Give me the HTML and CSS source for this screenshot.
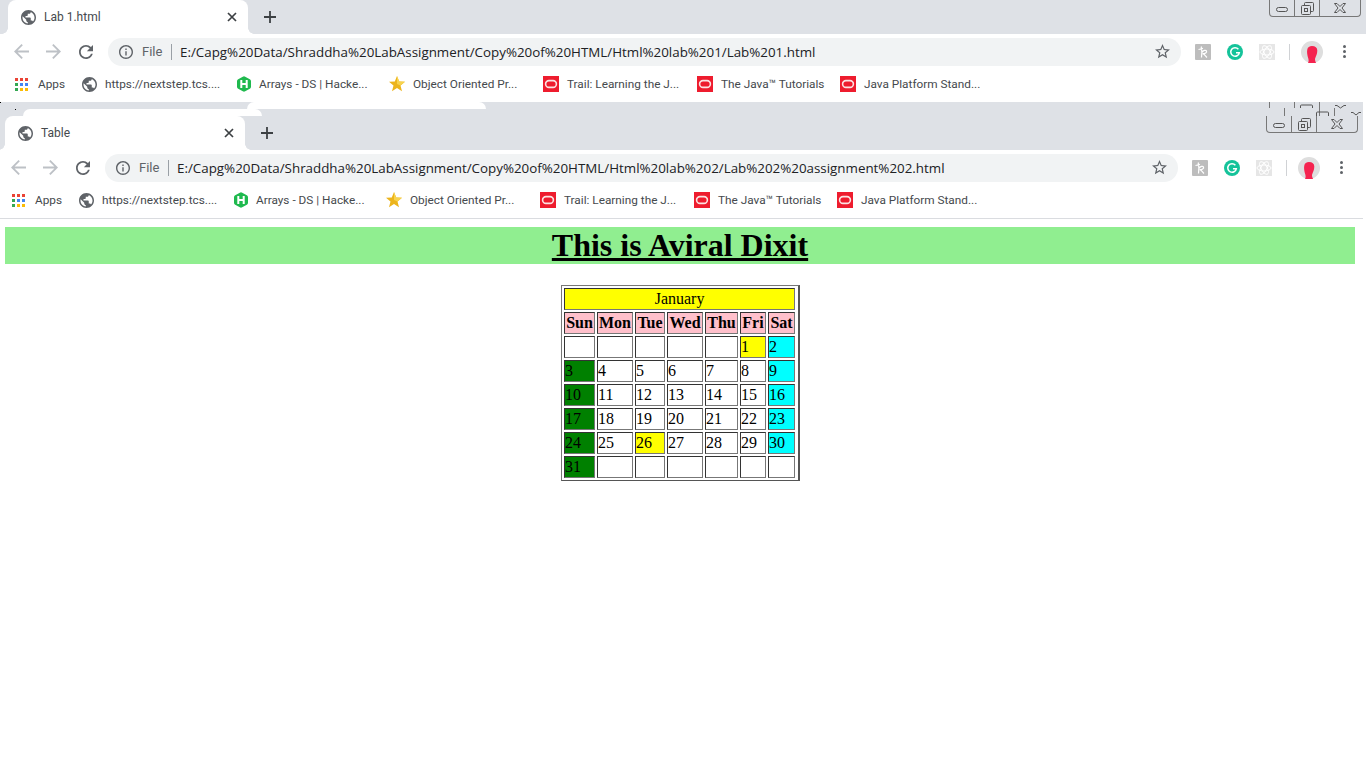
FILE: index.html
```html
<!DOCTYPE html>
<html>
  <head>
    <meta http-equiv="Content-Type" content="text/html; charset=utf-8">
    <title>Table</title>
    <link rel="stylesheet" href="styles.css">
  </head>
  <body>
    <svg class="defs" width="0" height="0">
      <symbol id="i-globe" viewBox="2 2 20 20"><path d="M12 2C6.48 2 2 6.48 2 12s4.48 10 10 10 10-4.48 10-10S17.52 2 12 2zm-1 17.93c-3.95-.49-7-3.85-7-7.93 0-.62.08-1.21.21-1.79L9 15v1c0 1.1.9 2 2 2v1.93zm6.9-2.54c-.26-.81-1-1.39-1.9-1.39h-1v-3c0-.55-.45-1-1-1H8v-2h2c.55 0 1-.45 1-1V7h2c1.1 0 2-.9 2-2v-.41c2.93 1.19 5 4.06 5 7.41 0 2.08-.8 3.97-2.1 5.39z"/></symbol>
      <symbol id="i-close" viewBox="0 0 10 10"><path d="M1 1l8 8M9 1l-8 8" fill="none" stroke="#3c4043" stroke-width="1.7"/></symbol>
      <symbol id="i-plus" viewBox="0 0 14 14"><path d="M7 1v12M1 7h12" fill="none" stroke="#3c4043" stroke-width="1.8"/></symbol>
      <symbol id="i-back" viewBox="4 4 16 16"><path d="M20 11H7.83l5.59-5.59L12 4l-8 8 8 8 1.41-1.41L7.83 13H20v-2z"/></symbol>
      <symbol id="i-forward" viewBox="4 4 16 16"><path d="M4 11h12.17l-5.59-5.59L12 4l8 8-8 8-1.41-1.41L16.17 13H4v-2z"/></symbol>
      <symbol id="i-reload" viewBox="4 4 16 16"><path d="M17.65 6.35C16.2 4.9 14.21 4 12 4c-4.42 0-7.99 3.58-7.99 8s3.57 8 7.99 8c3.73 0 6.84-2.55 7.73-6h-2.08c-.82 2.33-3.04 4-5.65 4-3.31 0-6-2.69-6-6s2.69-6 6-6c1.66 0 3.14.69 4.22 1.78L13 11h7V4l-2.35 2.35z"/></symbol>
      <symbol id="i-info" viewBox="2 2 20 20"><path d="M11 7h2v2h-2zm0 4h2v6h-2zm1-9C6.48 2 2 6.48 2 12s4.48 10 10 10 10-4.48 10-10S17.52 2 12 2zm0 18c-4.41 0-8-3.59-8-8s3.59-8 8-8 8 3.59 8 8-3.59 8-8 8z"/></symbol>
      <symbol id="i-star" viewBox="2 2 20 20"><path d="M22 9.24l-7.19-.62L12 2 9.19 8.63 2 9.24l5.46 4.73L5.82 21 12 17.27 18.18 21l-1.63-7.03L22 9.24zM12 15.4l-3.76 2.27 1-4.28-3.32-2.88 4.38-.38L12 6.1l1.71 4.04 4.38.38-3.32 2.88 1 4.28L12 15.4z"/></symbol>
      <symbol id="i-apps" viewBox="0 0 13 13">
        <rect width="3" height="3" fill="#ea4335"/><rect x="5" width="3" height="3" fill="#ea4335"/><rect x="10" width="3" height="3" fill="#ea4335"/>
        <rect y="5" width="3" height="3" fill="#34a853"/><rect x="5" y="5" width="3" height="3" fill="#4285f4"/><rect x="10" y="5" width="3" height="3" fill="#4285f4"/>
        <rect y="10" width="3" height="3" fill="#34a853"/><rect x="5" y="10" width="3" height="3" fill="#fbbc05"/><rect x="10" y="10" width="3" height="3" fill="#fbbc05"/>
      </symbol>
      <symbol id="i-hack" viewBox="0 0 16 16"><path d="M6.800.7q1.200-.7 2.400 0l4.600 2.600q1.200.7 1.200 2v5.400q0 1.300-1.200 2l-4.600 2.600q-1.200.7-2.400 0l-4.600-2.600q-1.200-.7-1.200-2V5.300q0-1.300 1.200-2z" fill="#1fb94e"/><path d="M5.300 4v8M10.700 4v8M5.300 8h5.400" fill="none" stroke="#fff" stroke-width="2"/></symbol>
      <symbol id="i-gold" viewBox="0 0 16 16"><path d="M8 0l2.200 5.400 5.800.4-4.500 3.700 1.500 5.700L8 12.100l-5 3.100 1.500-5.700L0 5.800l5.800-.4z" fill="#ecb41c"/><path d="M8 0l2.200 5.400 5.800.4-4.500 3.700L8 8z" fill="#f7d34e"/></symbol>
      <symbol id="i-oracle" viewBox="0 0 16 16"><rect width="16" height="16" fill="#ee1c2e"/><rect x="2.600" y="4.600" width="10.800" height="6.800" rx="3.400" fill="none" stroke="#fbe3e3" stroke-width="1.600"/></symbol>
      <symbol id="i-kami" viewBox="0 0 16 16"><rect width="16" height="16" rx="1" fill="#bdbdbd"/><path d="M3.500 5.500c1.500-.2 3-.6 4.500-1.300M6.200 2.500c.8 3.500.8 7.500.3 11M6.800 8.500c1.500-2.200 4-2.800 4.700-1.400s-1.500 2.600-3.800 2.600c1.800.3 2.600 2.500 4.300 3.800" fill="none" stroke="#fff" stroke-width="1.200"/></symbol>
      <symbol id="i-gram" viewBox="0 0 16 16"><circle cx="8" cy="8" r="8" fill="#15c39a"/><path d="M11.400 5.200A4.300 4.300 0 1 0 12.300 8.800H9" fill="none" stroke="#fff" stroke-width="1.500"/></symbol>
      <symbol id="i-atom" viewBox="0 0 16 16"><rect width="16" height="16" fill="#e6e6e6"/><g fill="none" stroke="#fff"><ellipse cx="8" cy="8" rx="7" ry="3"/><ellipse cx="8" cy="8" rx="7" ry="3" transform="rotate(60 8 8)"/><ellipse cx="8" cy="8" rx="7" ry="3" transform="rotate(120 8 8)"/></g></symbol>
      <symbol id="i-user" viewBox="0 0 22 22"><circle cx="11" cy="11" r="11" fill="#dedede"/><path d="M7 22c.8-1.500.7-3 .3-4.500C6.300 14.500 5.800 11.500 6.200 9 6.600 6 8.500 5 11 5c3.300 0 5.300 1.500 5.300 4.500 0 3-1.200 5.500-2.200 8-.3 1.500.3 3 1 4.500z" fill="#f5234f"/></symbol>
      <symbol id="i-min" viewBox="0 0 12 6"><rect x=".5" y=".5" width="11" height="4" rx="2" fill="none" stroke="#555"/></symbol>
      <symbol id="i-max" viewBox="0 0 13 13"><path d="M3.500 3V1.500q0-1 1-1h7q1 0 1 1v7q0 1-1 1H10" fill="none" stroke="#555"/><rect x=".5" y="3.500" width="9" height="9" rx="1" fill="none" stroke="#555"/><rect x="3.500" y="6.500" width="3" height="3" fill="none" stroke="#555"/></symbol>
      <symbol id="i-x" viewBox="0 0 12 10"><path d="M.5.500h2.500L6 3.500 9 .5h2.500L8 5l3.500 4.500H9L6 6.500 3 9.500H.5L4 5z" fill="none" stroke="#555"/></symbol>
    </svg>

    <div class="window first">
      <div class="tabstrip">
        <div class="tab">
          <svg class="tab-icon"><use href="#i-globe"/></svg>
          <span class="tab-title">Lab 1.html</span>
          <svg class="tab-close"><use href="#i-close"/></svg>
        </div>
        <svg class="new-tab"><use href="#i-plus"/></svg>
        <div class="controls">
          <span class="ctl"><svg class="ctl-min"><use href="#i-min"/></svg></span>
          <span class="ctl"><svg class="ctl-max"><use href="#i-max"/></svg></span>
          <span class="ctl wide"><svg class="ctl-x"><use href="#i-x"/></svg></span>
        </div>
      </div>
      <div class="toolbar">
        <svg class="nav off"><use href="#i-back"/></svg>
        <svg class="nav off"><use href="#i-forward"/></svg>
        <svg class="nav on"><use href="#i-reload"/></svg>
        <div class="omnibox">
          <svg class="info"><use href="#i-info"/></svg>
          <span class="scheme">File</span>
          <span class="url">E:/Capg%20Data/Shraddha%20LabAssignment/Copy%20of%20HTML/Html%20lab%201/Lab%201.html</span>
          <svg class="star"><use href="#i-star"/></svg>
        </div>
        <svg class="ext"><use href="#i-kami"/></svg>
        <svg class="ext"><use href="#i-gram"/></svg>
        <svg class="ext"><use href="#i-atom"/></svg>
        <span class="sep"></span>
        <svg class="avatar"><use href="#i-user"/></svg>
        <span class="dots"><i></i><i></i><i></i></span>
      </div>
      <div class="bookmarks">
        <a><svg class="bm-apps"><use href="#i-apps"/></svg>Apps</a>
        <a><svg class="bm-globe"><use href="#i-globe"/></svg>https://nextstep.tcs....</a>
        <a><svg class="bm-hack"><use href="#i-hack"/></svg>Arrays - DS | Hacke...</a>
        <a><svg><use href="#i-gold"/></svg>Object Oriented Pr...</a>
        <a><svg><use href="#i-oracle"/></svg>Trail: Learning the J...</a>
        <a><svg><use href="#i-oracle"/></svg>The Java™ Tutorials</a>
        <a><svg><use href="#i-oracle"/></svg>Java Platform Stand...</a>
      </div>
    </div>

    <div class="window second">
      <div class="tabstrip">
        <span class="speck speck-a"></span>
        <span class="speck speck-b"></span>
        <span class="ghost ghost-a"></span>
        <span class="ghost ghost-b"></span>
        <div class="tab">
          <svg class="tab-icon"><use href="#i-globe"/></svg>
          <span class="tab-title">Table</span>
          <svg class="tab-close"><use href="#i-close"/></svg>
        </div>
        <svg class="new-tab"><use href="#i-plus"/></svg>
        <svg class="ghost-ctl" viewBox="0 0 100 14">
          <path d="M3.500 0v6M28.500 0v6M53.500 0v14M18.500 6v8M68.500 6v8" fill="none" stroke="#777"/>
          <path d="M34.500 6V4q0-1 1-1h10q1 0 1 1v2M50.500 14v-3q0-1 1-1h10q1 0 1 1v3M69 3.500h2l3.500 2.500L78 3.500h2M85 10.500h2l3 2.500 3-2.500h2" fill="none" stroke="#555"/>
        </svg>
        <div class="controls">
          <span class="ctl"><svg class="ctl-min"><use href="#i-min"/></svg></span>
          <span class="ctl"><svg class="ctl-max"><use href="#i-max"/></svg></span>
          <span class="ctl wide"><svg class="ctl-x"><use href="#i-x"/></svg></span>
        </div>
      </div>
      <div class="toolbar">
        <svg class="nav off"><use href="#i-back"/></svg>
        <svg class="nav off"><use href="#i-forward"/></svg>
        <svg class="nav on"><use href="#i-reload"/></svg>
        <div class="omnibox">
          <svg class="info"><use href="#i-info"/></svg>
          <span class="scheme">File</span>
          <span class="url">E:/Capg%20Data/Shraddha%20LabAssignment/Copy%20of%20HTML/Html%20lab%202/Lab%202%20assignment%202.html</span>
          <svg class="star"><use href="#i-star"/></svg>
        </div>
        <svg class="ext"><use href="#i-kami"/></svg>
        <svg class="ext"><use href="#i-gram"/></svg>
        <svg class="ext"><use href="#i-atom"/></svg>
        <span class="sep"></span>
        <svg class="avatar"><use href="#i-user"/></svg>
        <span class="dots"><i></i><i></i><i></i></span>
      </div>
      <div class="bookmarks ruled">
        <a><svg class="bm-apps"><use href="#i-apps"/></svg>Apps</a>
        <a><svg class="bm-globe"><use href="#i-globe"/></svg>https://nextstep.tcs....</a>
        <a><svg class="bm-hack"><use href="#i-hack"/></svg>Arrays - DS | Hacke...</a>
        <a><svg><use href="#i-gold"/></svg>Object Oriented Pr...</a>
        <a><svg><use href="#i-oracle"/></svg>Trail: Learning the J...</a>
        <a><svg><use href="#i-oracle"/></svg>The Java™ Tutorials</a>
        <a><svg><use href="#i-oracle"/></svg>Java Platform Stand...</a>
      </div>

      <div class="page">
        <h1>This is Aviral Dixit</h1>
        <table class="cal">
          <colgroup><col class="c31"><col class="c36"><col class="c30"><col class="c36"><col class="c33"><col class="c26"><col class="c27"></colgroup>
          <tr><td colspan="7" class="month">January</td></tr>
          <tr><th>Sun</th><th>Mon</th><th>Tue</th><th>Wed</th><th>Thu</th><th>Fri</th><th>Sat</th></tr>
          <tr><td></td><td></td><td></td><td></td><td></td><td class="hol">1</td><td class="sat">2</td></tr>
          <tr><td class="sun">3</td><td>4</td><td>5</td><td>6</td><td>7</td><td>8</td><td class="sat">9</td></tr>
          <tr><td class="sun">10</td><td>11</td><td>12</td><td>13</td><td>14</td><td>15</td><td class="sat">16</td></tr>
          <tr><td class="sun">17</td><td>18</td><td>19</td><td>20</td><td>21</td><td>22</td><td class="sat">23</td></tr>
          <tr><td class="sun">24</td><td>25</td><td class="hol">26</td><td>27</td><td>28</td><td>29</td><td class="sat">30</td></tr>
          <tr><td class="sun">31</td><td></td><td></td><td></td><td></td><td></td><td></td></tr>
        </table>
      </div>
    </div>
  </body>
</html>
```

FILE: styles.css
```css
html, body { margin: 0; height: 100%; overflow: hidden; background: #fff; }
body { width: 1366px; height: 768px; }
.defs { position: absolute; }

/* the two chrome windows, second one sits 3px further left */
.window { width: 1366px; font-family: Roboto, "Open Sans", sans-serif; }
.window.second { margin-left: -3px; }

.tabstrip { position: relative; display: flex; align-items: flex-end; height: 34px; padding-left: 8px; background: #dee1e6; }
.second .tabstrip { height: 48px; }
.tab { position: relative; display: flex; align-items: center; box-sizing: border-box; width: 240px; height: 34px; padding: 0 11px 0 13px; background: #fff; border-radius: 8px 8px 0 0; }
.tab::before, .tab::after { content: ""; position: absolute; bottom: 0; width: 6px; height: 6px; }
.tab::before { left: -6px; background: radial-gradient(circle at 0 0, transparent 5.5px, #fff 6px); }
.tab::after { right: -6px; background: radial-gradient(circle at 100% 0, transparent 5.5px, #fff 6px); }
.tab-icon { width: 15px; height: 15px; fill: #5f6368; margin-right: 8px; }
.tab-title { flex: 1; font-size: 12px; color: #45494d; }
.tab-close { width: 10px; height: 10px; }
.new-tab { width: 14px; height: 14px; margin: 0 0 10px 15px; }

.ghost { position: absolute; height: 7px; width: 239px; background: #fff; border-radius: 7px 7px 0 0; }
.ghost-a { left: 250px; top: 0; }
.ghost-b { left: 26px; top: 7px; }
.ghost-ctl { position: absolute; left: 1269px; top: 0; width: 100px; height: 14px; }
.speck { position: absolute; width: 1px; height: 1px; background: #000; }
.speck-a { left: 3px; top: 0; }
.speck-b { left: 18px; top: 7px; }

.controls { position: absolute; top: 0; right: 5px; display: flex; box-sizing: border-box; height: 17px; border: 1px solid #777; border-top: 0; border-radius: 0 0 4px 4px; }
.second .controls { top: 14px; background: #dee1e6; }
.ctl { display: flex; align-items: center; justify-content: center; box-sizing: border-box; width: 25px; border-right: 1px solid #777; }
.ctl.wide { width: 40px; border-right: 0; }
.ctl-min { width: 12px; height: 6px; margin-top: 3px; }
.ctl-max { width: 13px; height: 13px; }
.ctl-x { width: 12px; height: 10px; }

.toolbar { display: flex; align-items: center; height: 35px; background: #fff; }
.nav { width: 15px; height: 15px; margin-left: 17px; flex: none; }
.nav:first-child { margin-left: 14px; }
.nav.off { fill: #bdc1c6; }
.nav.on { fill: #5f6368; margin-left: 18px; width: 14px; height: 14px; }
.omnibox { display: flex; align-items: center; box-sizing: border-box; width: 1073px; height: 28px; margin-left: 15px; padding: 0 10px 0 11px; background: #f1f3f4; border-radius: 14px; }
.info { width: 14px; height: 14px; fill: #5f6368; }
.scheme { width: 21px; font-size: 13px; line-height: 16px; color: #5f6368; margin-left: 9px; padding-right: 8px; border-right: 1px solid #9aa0a6; }
.url { flex: 1; font-family: "Open Sans", sans-serif; font-size: 13.37px; color: #202124; margin-left: 8px; white-space: nowrap; }
.star { width: 15px; height: 15px; fill: #5f6368; margin-right: 1px; }
.ext { width: 16px; height: 16px; flex: none; margin-left: 14px; }
.ext + .ext { margin-left: 16px; }
.sep { width: 1px; height: 16px; background: #d0d2d5; margin-left: 14px; }
.avatar { width: 22px; height: 22px; margin-left: 11px; }
.dots { display: flex; flex-direction: column; gap: 2px; margin-left: 20px; }
.dots i { width: 3px; height: 3px; border-radius: 50%; background: #5f6368; }

.bookmarks { display: grid; grid-template-columns: 67px 154px 153px 154px 154px 143px 200px; align-items: center; box-sizing: border-box; height: 33px; padding: 0 0 3px 15px; background: #fff; font-size: 11.8px; color: #45494d; }
.bookmarks.ruled { height: 34px; border-bottom: 1px solid #dadce0; }
.bookmarks a { display: flex; align-items: center; white-space: nowrap; }
.bookmarks svg { width: 16px; height: 16px; margin-right: 8px; flex: none; }
.bookmarks .bm-apps { width: 13px; height: 13px; margin-right: 10px; }
.bookmarks .bm-globe { width: 15px; height: 15px; fill: #5f6368; }
.bookmarks .bm-hack { margin-right: 7px; }

/* the page shown in the second window */
.page { padding: 8px; font-family: "Liberation Serif", serif; color: #000; font-size: 16px; }
h1 { margin: 0 0 21px; background: lightgreen; text-align: center; text-decoration: underline; font-size: 32px; line-height: 37px; }
.cal { table-layout: fixed; box-sizing: border-box; width: 239px; margin: 0 0 0 calc(50% - 119px); padding-right: 1px; border: 1px solid; border-color: #777 #555 #555 #777; border-right-width: 2px; border-spacing: 2px; }
.c31 { width: 31px; } .c36 { width: 36px; } .c30 { width: 30px; } .c33 { width: 33px; } .c26 { width: 26px; } .c27 { width: 27px; }
.cal th, .cal td { height: 18px; padding: 1px 1px 1px 0; border: 1px solid; border-color: #333 #777 #777 #333; text-align: left; line-height: 18px; overflow: hidden; white-space: nowrap; }
.cal th { background: pink; text-align: center; padding: 1px; }
.cal td.month { background: yellow; text-align: center; padding: 1px; }
.hol { background: yellow; }
.sat { background: aqua; }
.sun { background: green; }
```
